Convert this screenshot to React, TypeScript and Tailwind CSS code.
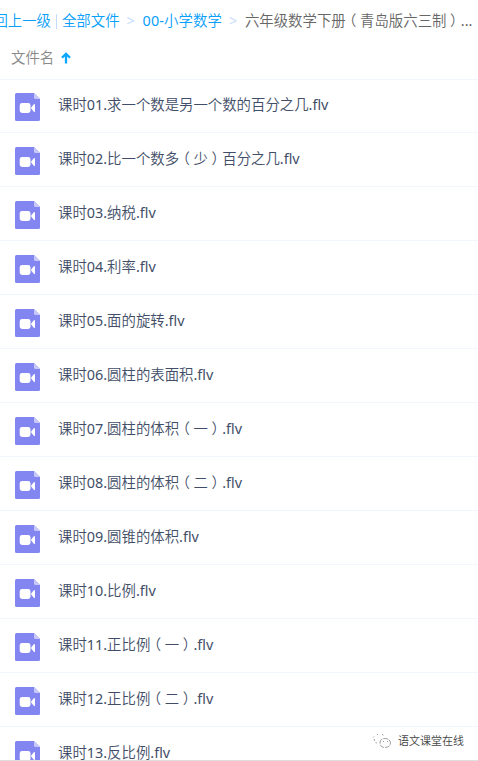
import React from "react";

const files = [
  "课时01.求一个数是另一个数的百分之几.flv",
  "课时02.比一个数多（少）百分之几.flv",
  "课时03.纳税.flv",
  "课时04.利率.flv",
  "课时05.面的旋转.flv",
  "课时06.圆柱的表面积.flv",
  "课时07.圆柱的体积（一）.flv",
  "课时08.圆柱的体积（二）.flv",
  "课时09.圆锥的体积.flv",
  "课时10.比例.flv",
  "课时11.正比例（一）.flv",
  "课时12.正比例（二）.flv",
  "课时13.反比例.flv",
];

/* Full-width brackets are trimmed to half width and padded, so they sit mid-box. */
function Label({ text }: { text: string }) {
  return (
    <>
      {text.split(/([（）])/).map((part, i) =>
        part === "（" || part === "）" ? (
          <span key={i} className="px-[3.6px] [font-feature-settings:'halt']">{part}</span>
        ) : (
          part
        ),
      )}
    </>
  );
}

function VideoIcon() {
  return (
    <svg width="25" height="28" viewBox="0 0 25 28" className="block shrink-0">
      <path d="M1.5 0H19L25 6V26.5Q25 28 23.5 28H1.5Q0 28 0 26.5V1.5Q0 0 1.5 0Z" fill="#8385f0" />
      <path d="M19 0L25 6H20.5Q19 6 19 4.5Z" fill="#c8c8fa" />
      <rect x="4.7" y="10" width="10.8" height="10" rx="2.4" fill="#fff" />
      <path d="M15.8 15L18.8 11.2Q20 10.4 20 11.8V18.2Q20 19.6 18.8 18.8Z" fill="#fff" />
    </svg>
  );
}

function SortArrow() {
  return (
    <svg width="10" height="12" viewBox="0 0 10 12" className="ml-[7px] block">
      <path d="M5 11.5V2M1 5.8L5 1.8L9 5.8" fill="none" stroke="#09a7ff" strokeWidth="2.3" />
    </svg>
  );
}

function Watermark() {
  return (
    <div className="absolute left-[372px] top-[732px] flex h-[18px] items-center">
      <svg width="20" height="16" viewBox="0 0 20 16" fill="none" stroke="#888" strokeWidth="0.8">
        <path d="M1 4.5L2 3.5M2 6Q3 9 5 10.5M5 1.5H6M10 1L12 3" strokeDasharray="2 1.4" />
        <path d="M8 10Q8 5.5 13 5.5T18.5 10Q18 14.5 13 14.5T8 10Z" strokeDasharray="5 1" />
        <path d="M11 8.5H12M15 8.5H16" />
      </svg>
      <span className="ml-[6px] text-[11px] leading-[18px] text-[#444]">语文课堂在线</span>
    </div>
  );
}

export default function App() {
  return (
    <div className="relative flex h-[761px] w-[478px] flex-col overflow-hidden border-b border-[#dedede] bg-white font-['Noto_Sans','Noto_Sans_CJK_SC_DemiLight','Noto_Sans_CJK_SC',sans-serif] text-[14.4px] whitespace-nowrap">
      <nav className="-ml-[21px] flex h-[42px] shrink-0 items-center text-[#09a0fb]">
        <span>返回上一级</span>
        <span className="mr-[5px] ml-[5px] h-[15px] w-px bg-[#c4dbfe]" />
        <span>全部文件</span>
        <span className="ml-[7px] w-[16px] text-[#c4dbfe]">&gt;</span>
        <span className="tracking-[0.1px]">00-小学数学</span>
        <span className="ml-[7px] w-[16px] text-[#c4dbfe]">&gt;</span>
        <span className="text-[#666]"><Label text="六年级数学下册（青岛版六三制）..." /></span>
      </nav>
      <div className="flex h-[38px] shrink-0 items-center border-b border-[#f2f6fd] pb-[6px] pl-[11px] text-[#888]">
        <span>文件名</span>
        <SortArrow />
      </div>
      <ul className="-mt-px">
        {files.map((name) => (
          <li key={name} className="flex h-[54px] items-center border-b border-[#f2f6fd] pt-[2px] pl-[15px] text-[#424e67]">
            <VideoIcon />
            <span className="mb-[3px] ml-[18px]"><Label text={name} /></span>
          </li>
        ))}
      </ul>
      <Watermark />
    </div>
  );
}
